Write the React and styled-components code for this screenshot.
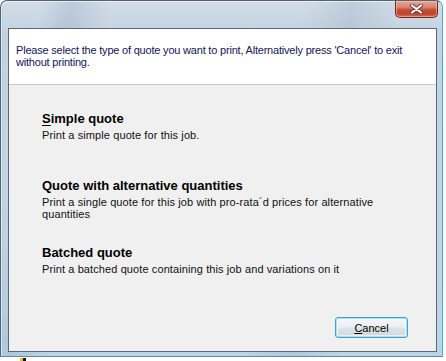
import React from 'react'
import styled, { createGlobalStyle } from 'styled-components'

const options = [
    {
        id: 'simple',
        title: <><u>S</u>imple quote</>,
        text: 'Print a simple quote for this job.',
    },
    {
        id: 'alt',
        title: 'Quote with alternative quantities',
        text: 'Print a single quote for this job with pro-rata\u00b4d prices for alternative quantities',
    },
    {
        id: 'batched',
        title: 'Batched quote',
        text: 'Print a batched quote containing this job and variations on it',
    },
]

function CloseGlyph() {
    return (
        <svg width="13" height="10" viewBox="0 0 13 10">
            <path d="M2 1.5 L11 8.5 M11 1.5 L2 8.5" stroke="#5a3a36" strokeWidth="4" strokeLinecap="round" />
            <path d="M2 1.5 L11 8.5 M11 1.5 L2 8.5" stroke="#ffffff" strokeWidth="2.2" strokeLinecap="round" />
        </svg>
    )
}

function App() {
    return (
        <Screen>
            <GlobalStyle />
            <Window>
                <TitleBar>
                    <CloseButton aria-label="Close">
                        <CloseGlyph />
                    </CloseButton>
                </TitleBar>
                <Client>
                    <Header>
                        Please select the type of quote you want to print, Alternatively press 'Cancel' to exit without printing.
                    </Header>
                    <Body>
                        <OptionList>
                            {options.map(o => (
                                <Option key={o.id}>
                                    <OptionTitle>{o.title}</OptionTitle>
                                    <OptionText>{o.text}</OptionText>
                                </Option>
                            ))}
                        </OptionList>
                        <Footer>
                            <Button><u>C</u>ancel</Button>
                        </Footer>
                    </Body>
                </Client>
            </Window>
            <Desktop>
                <TrayIcon width="8" height="4" viewBox="0 0 8 4">
                    <rect x="0" y="1" width="3" height="3" fill="#e8c020" />
                    <rect x="3" y="1" width="3" height="3" fill="#101010" />
                </TrayIcon>
            </Desktop>
        </Screen>
    )
}

export default App

const GlobalStyle = createGlobalStyle`
   html, body {
       margin: 0;
       padding: 0;
       background: #ffffff;
   }

   body {
       width: 446px;
       height: 361px;
       overflow: hidden;
       font-family: "Liberation Sans", Arial, sans-serif;
   }
`;

const Screen = styled.div`
   width: 446px;
   height: 361px;
   display: flex;
   flex-direction: column;
`;

const Window = styled.div`
   box-sizing: border-box;
   width: 443px;
   height: 357px;
   display: flex;
   flex-direction: column;
   border: 1px solid #56636f;
   border-right-color: #3ab4e4;
   border-bottom-color: #6f8596;
   border-radius: 7px 7px 0 0;
   background:
       linear-gradient(100deg, rgba(255,255,255,0) 8%, rgba(150,170,192,0.35) 14%, rgba(255,255,255,0) 22%,
           rgba(255,255,255,0) 60%, rgba(150,170,192,0.3) 70%, rgba(255,255,255,0) 80%),
       linear-gradient(180deg, #d3dde8 0%, #c5d3e1 30px, #c2d4e5 80%, #b9d5ea 100%);
   box-shadow: inset 1px 1px 0 rgba(255,255,255,0.6), inset 3px 0 0 -1px rgba(120,200,240,0.25);
`;

const TitleBar = styled.div`
   height: 27px;
   display: flex;
   justify-content: flex-end;
   align-items: flex-start;
   padding-right: 4px;
`;

const CloseButton = styled.div`
   box-sizing: border-box;
   width: 43px;
   height: 17px;
   display: flex;
   align-items: center;
   justify-content: center;
   border: 1px solid #6b2a20;
   border-top: none;
   border-radius: 0 0 5px 5px;
   background: linear-gradient(180deg, #e6a595 0%, #d98270 40%, #c84a32 55%, #c0442c 80%, #d0705a 100%);
   box-shadow: inset 0 0 0 1px rgba(255,220,210,0.45);
`;

const Client = styled.div`
   flex: 1;
   display: flex;
   flex-direction: column;
   margin: 0 5px 4px 7px;
   border: 1px solid #5c6874;
   min-height: 0;
`;

const Header = styled.div`
   box-sizing: border-box;
   height: 56px;
   padding: 15px 10px 0 7px;
   background: #ffffff;
   border-bottom: 1px solid #c9c9c9;
   font-size: 11px;
   line-height: 12px;
   letter-spacing: -0.2px;
   color: #14145a;
`;

const Body = styled.div`
   flex: 1;
   display: flex;
   flex-direction: column;
   background: #f0f0f0;
`;

const OptionList = styled.div`
   display: grid;
   grid-auto-rows: 67px;
   padding: 26px 0 0 33px;
`;

const Option = styled.div`
   display: flex;
   flex-direction: column;
`;

const OptionTitle = styled.div`
   font-size: 13px;
   line-height: 15px;
   font-weight: bold;
   color: #000000;

   > u {
       text-decoration-thickness: 1px;
       text-underline-offset: 2px;
   }
`;

const OptionText = styled.div`
   max-width: 360px;
   margin-top: 3px;
   font-size: 11px;
   line-height: 12px;
   letter-spacing: 0.1px;
   color: #111111;
`;

const Footer = styled.div`
   margin-top: auto;
   display: flex;
   justify-content: flex-end;
   padding: 0 28px 13px 0;
`;

const Button = styled.div`
   box-sizing: border-box;
   width: 73px;
   height: 21px;
   display: flex;
   align-items: center;
   justify-content: center;
   border: 1px solid #3aa4da;
   border-radius: 3px;
   background: linear-gradient(180deg, #f4f6f8 0%, #eceff2 48%, #dde2e6 52%, #d2d8dd 100%);
   box-shadow: inset 0 0 0 1px #a8e0f8, inset 0 0 0 2px rgba(255,255,255,0.6);
   font-size: 11px;
   color: #000000;

   > u {
       text-underline-offset: 1px;
   }
`;

const Desktop = styled.div`
   flex: 1;
   display: flex;
   align-items: flex-start;
   padding-left: 20px;
`;

const TrayIcon = styled.svg`
   display: block;
`;
